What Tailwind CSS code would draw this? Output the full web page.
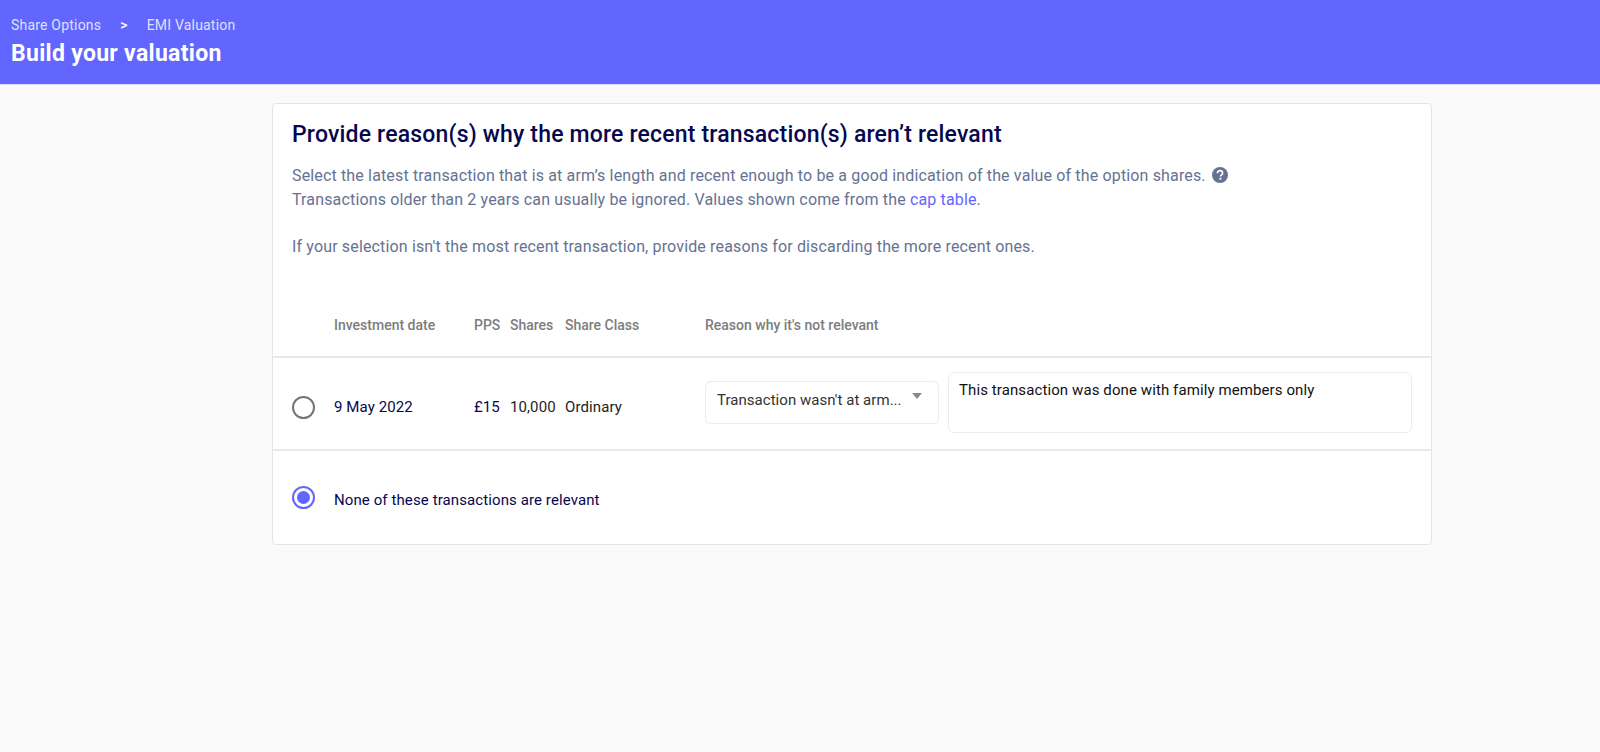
<!DOCTYPE html>
<html lang="en">
<head>
    <meta charset="UTF-8">
    <meta name="viewport" content="width=device-width, initial-scale=1.0">
    <title>Build your valuation</title>
    <script src="https://cdn.jsdelivr.net/npm/@tailwindcss/browser@4"></script>
</head>
<body class="bg-[#fafafa] font-[Roboto,sans-serif] min-h-[752px]">
    <!-- Header -->
    <header class="h-[85px] bg-[#6266ff] border-b border-[#dcdcf5] pl-[11px] pt-[17px]">
        <div class="flex items-center text-[14px] leading-[17px] text-[#dfe0ff] tracking-[0.2px]">
            <span>Share Options</span>
            <span class="ml-[19px] text-white font-medium">&gt;</span>
            <span class="ml-[19px]">EMI Valuation</span>
        </div>
        <h1 class="mt-[6px] text-[23px] leading-[28px] font-bold text-white tracking-[0.3px]">Build your valuation</h1>
    </header>

    <!-- Card -->
    <main class="ml-[272px] mt-[18px] w-[1160px] h-[442px] bg-white border border-[#e4e4e8] rounded-[4px] flex flex-col">
        <div class="px-[19px] pt-[16px] h-[205px] text-[16px] leading-[24px] text-[#667292] tracking-[0.15px]">
            <h2 class="text-[23px] leading-[30px] font-medium text-[#05074f] tracking-[0.18px]">Provide reason(s) why the more recent transaction(s) aren’t relevant</h2>
            <p class="mt-[14px] flex items-center">
                Select the latest transaction that is at arm’s length and recent enough to be a good indication of the value of the option shares.
                <svg class="ml-[6px] mb-[3px]" width="16" height="16" viewBox="0 0 16 16">
                    <circle cx="8" cy="8" r="8" fill="#667292"/>
                    <path d="M5.4 6.2a2.6 2.6 0 0 1 5.2 0c0 1.6-2.1 1.7-2.1 3.3" fill="none" stroke="#fff" stroke-width="1.7"/>
                    <rect x="7.5" y="10.8" width="1.9" height="1.9" fill="#fff"/>
                </svg>
            </p>
            <p>Transactions older than 2 years can usually be ignored. Values shown come from the <a href="#" class="text-[#6266ff]">cap table</a>.</p>
            <p class="mt-[23px]">If your selection isn't the most recent transaction, provide reasons for discarding the more recent ones.</p>
        </div>

        <!-- Table header -->
        <div class="flex h-[49px] pl-[61px] pt-[8px] text-[14px] leading-[16px] font-medium text-[#7d7d7d] border-b-2 border-[#e8e8e8]">
            <span class="w-[140px]">Investment date</span>
            <span class="w-[36px]">PPS</span>
            <span class="w-[55px]">Shares</span>
            <span class="w-[140px]">Share Class</span>
            <span>Reason why it's not relevant</span>
        </div>

        <!-- Transaction row -->
        <div class="flex items-center h-[93px] px-[19px] border-b-2 border-[#e8e8e8] text-[15px] leading-[20px] tracking-[0.1px]">
            <div class="flex items-center pt-[7px]">
                <span class="w-[23px] h-[23px] rounded-full border-2 border-[#757575]"></span>
                <span class="ml-[19px] w-[140px] text-[#05074f]">9 May 2022</span>
                <span class="w-[36px] text-[#05074f]">£15</span>
                <span class="w-[55px] text-[#1c1c2b]">10,000</span>
                <span class="w-[140px] text-[#222222]">Ordinary</span>
            </div>
            <div class="flex flex-1 items-center gap-[9px] mb-[3px]">
                <div class="flex justify-between w-[234px] h-[43px] pl-[11px] pr-[16px] pt-[8px] border border-[#ececf0] rounded-[6px] text-[#333333] tracking-[0.04px]">
                    <span>Transaction wasn't at arm...</span>
                    <svg class="mt-[3px]" width="10" height="6" viewBox="0 0 10 6"><path d="M0 0h10L5 6z" fill="#8a8a8a"/></svg>
                </div>
                <textarea rows="2" class="flex-1 h-[61px] resize-none px-[10px] pt-[7px] border border-[#ececf0] rounded-[6px] text-[#111111] outline-none">This transaction was done with family members only</textarea>
            </div>
        </div>

        <!-- None of the above -->
        <div class="flex flex-1 items-center px-[19px] text-[15px] leading-[20px] tracking-[0.1px] text-[#05074f]">
            <span class="flex items-center justify-center w-[23px] h-[23px] rounded-full border-2 border-[#6266ff]">
                <span class="w-[13px] h-[13px] rounded-full bg-[#6266ff]"></span>
            </span>
            <span class="ml-[19px] pt-[5px]">None of these transactions are relevant</span>
        </div>
    </main>
</body>
</html>
